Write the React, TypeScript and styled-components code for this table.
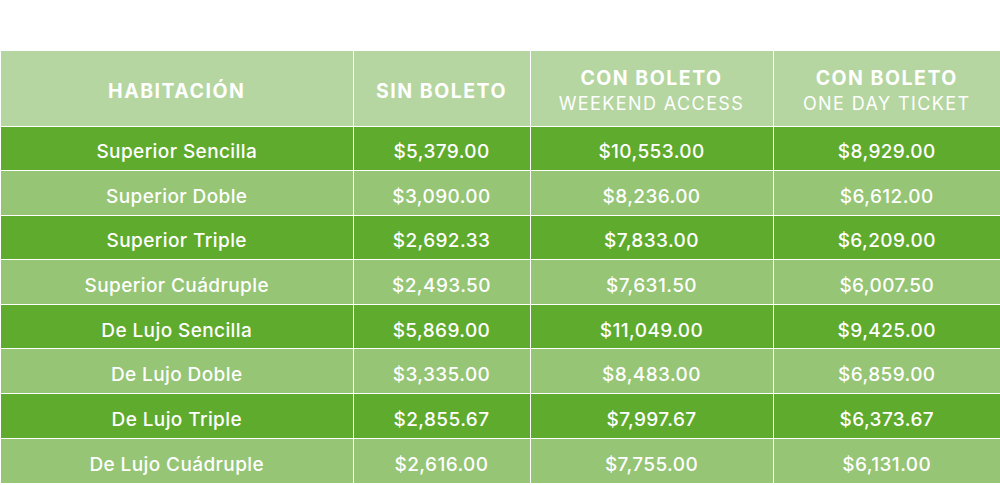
import React from 'react';
import styled, { createGlobalStyle } from 'styled-components';

const GlobalStyle = createGlobalStyle`
  html, body {
    margin: 0;
    padding: 0;
    background: #ffffff;
    font-family: Inter, "Open Sans", "Liberation Sans", sans-serif;
  }
`;

const Page = styled.div`
  padding: 51px 0 0 1px;
  width: 1000px;
  height: 485px;
  box-sizing: border-box;
  overflow: hidden;
`;

const Table = styled.table`
  width: 999px;
  border-collapse: collapse;
  table-layout: fixed;
  color: #ffffff;
`;

const HeadCell = styled.th`
  height: 75px;
  box-sizing: border-box;
  padding: 6px 0 0;
  background: #b5d6a0;
  border-right: 1px solid #ffffff;
  font-size: 19.5px;
  font-weight: 700;
  line-height: 26px;
  letter-spacing: 1.5px;
  text-align: center;
  vertical-align: middle;
  &:last-child {
    border-right: none;
  }
`;

const SubTitle = styled.span`
  display: block;
  font-weight: 400;
  font-size: 18px;
  letter-spacing: 1.4px;
`;

const Row = styled.tr<{ $dark: boolean }>`
  background: ${p => (p.$dark ? '#5fab2d' : '#95c575')};
`;

const Cell = styled.td`
  height: 44.6px;
  box-sizing: border-box;
  padding: 7px 0 0;
  border-top: 1px solid #ffffff;
  border-right: 1px solid #ffffff;
  font-size: 19px;
  font-weight: 500;
  letter-spacing: 0.4px;
  text-align: center;
  vertical-align: middle;
  &:last-child {
    border-right: none;
  }
`;

const rows = [
  ['Superior Sencilla', '$5,379.00', '$10,553.00', '$8,929.00'],
  ['Superior Doble', '$3,090.00', '$8,236.00', '$6,612.00'],
  ['Superior Triple', '$2,692.33', '$7,833.00', '$6,209.00'],
  ['Superior Cuádruple', '$2,493.50', '$7,631.50', '$6,007.50'],
  ['De Lujo Sencilla', '$5,869.00', '$11,049.00', '$9,425.00'],
  ['De Lujo Doble', '$3,335.00', '$8,483.00', '$6,859.00'],
  ['De Lujo Triple', '$2,855.67', '$7,997.67', '$6,373.67'],
  ['De Lujo Cuádruple', '$2,616.00', '$7,755.00', '$6,131.00'],
];

export default function App() {
  return (
    <Page>
      <GlobalStyle />
      <Table>
        <colgroup>
          <col style={{ width: 352 }} />
          <col style={{ width: 177 }} />
          <col style={{ width: 243 }} />
          <col style={{ width: 227 }} />
        </colgroup>
        <thead>
          <tr>
            <HeadCell>HABITACIÓN</HeadCell>
            <HeadCell>SIN BOLETO</HeadCell>
            <HeadCell>
              CON BOLETO
              <SubTitle>WEEKEND ACCESS</SubTitle>
            </HeadCell>
            <HeadCell>
              CON BOLETO
              <SubTitle>ONE DAY TICKET</SubTitle>
            </HeadCell>
          </tr>
        </thead>
        <tbody>
          {rows.map((r, i) => (
            <Row key={r[0]} $dark={i % 2 === 0}>
              {r.map((c, j) => (
                <Cell key={j}>{c}</Cell>
              ))}
            </Row>
          ))}
        </tbody>
      </Table>
    </Page>
  );
}
